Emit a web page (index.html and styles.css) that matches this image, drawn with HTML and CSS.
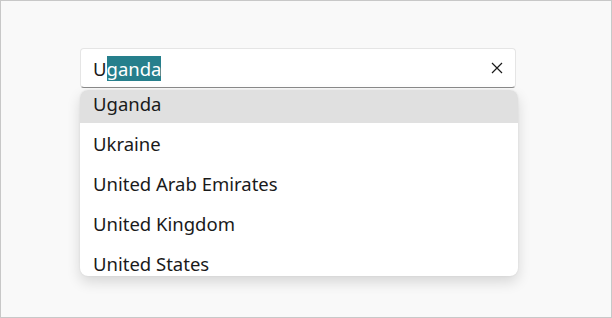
FILE: index.html
```html
<!DOCTYPE html>
<html lang="en">
<head>
    <meta charset="UTF-8">
    <title>AutoSuggestBox</title>
    <link rel="stylesheet" href="styles.css">
</head>
<body>
    <div class="frame">
        <div class="suggest">
            <!-- Text box -->
            <div class="textbox">
                <span class="typed">U</span><span class="selected">ganda</span>
                <svg class="clear" width="12" height="12" viewBox="0 0 12 12">
                    <path d="M1 1 L11 11 M11 1 L1 11" stroke="#1a1a1a" stroke-width="1.2" fill="none"/>
                </svg>
            </div>

            <!-- Suggestion list -->
            <div class="popup">
                <ul class="list">
                    <li class="item active">Uganda</li>
                    <li class="item">Ukraine</li>
                    <li class="item">United Arab Emirates</li>
                    <li class="item">United Kingdom</li>
                    <li class="item">United States</li>
                </ul>
            </div>
        </div>
    </div>
</body>
</html>
```

FILE: styles.css
```css
html, body {
    margin: 0;
    padding: 0;
}

body {
    font-family: "Noto Sans", "Open Sans", sans-serif;
    color: #1a1a1a;
}

.frame {
    width: 612px;
    height: 318px;
    box-sizing: border-box;
    border: 1px solid #c8c8c8;
    background-color: #f9f9f9;
    padding: 47px 0 0 79px;
}

.suggest {
    width: 438px;
}

.textbox {
    width: 436px;
    height: 40px;
    box-sizing: border-box;
    background-color: #ffffff;
    border: 1px solid #e5e5e5;
    border-bottom: 1px solid #8a8a8a;
    border-radius: 4px;
    display: flex;
    align-items: center;
    padding: 0 12px 0 12px;
    font-size: 18.5px;
}

.selected {
    background-color: #267f8c;
    color: #ffffff;
    line-height: 25px;
}

.clear {
    margin-left: auto;
}

.popup {
    margin-top: 2px;
    height: 186px;
    overflow: hidden;
    background-color: #ffffff;
    border-radius: 8px;
    box-shadow: 0 6px 14px rgba(0, 0, 0, 0.14), 0 0 2px rgba(0, 0, 0, 0.08);
}

.list {
    list-style: none;
    margin: -7px 0 0 0;
    padding: 0;
}

.item {
    height: 40px;
    line-height: 42px;
    padding-left: 13px;
    font-size: 18.5px;
    overflow: hidden;
}

.item.active {
    background-color: #e0e0e0;
}
```
